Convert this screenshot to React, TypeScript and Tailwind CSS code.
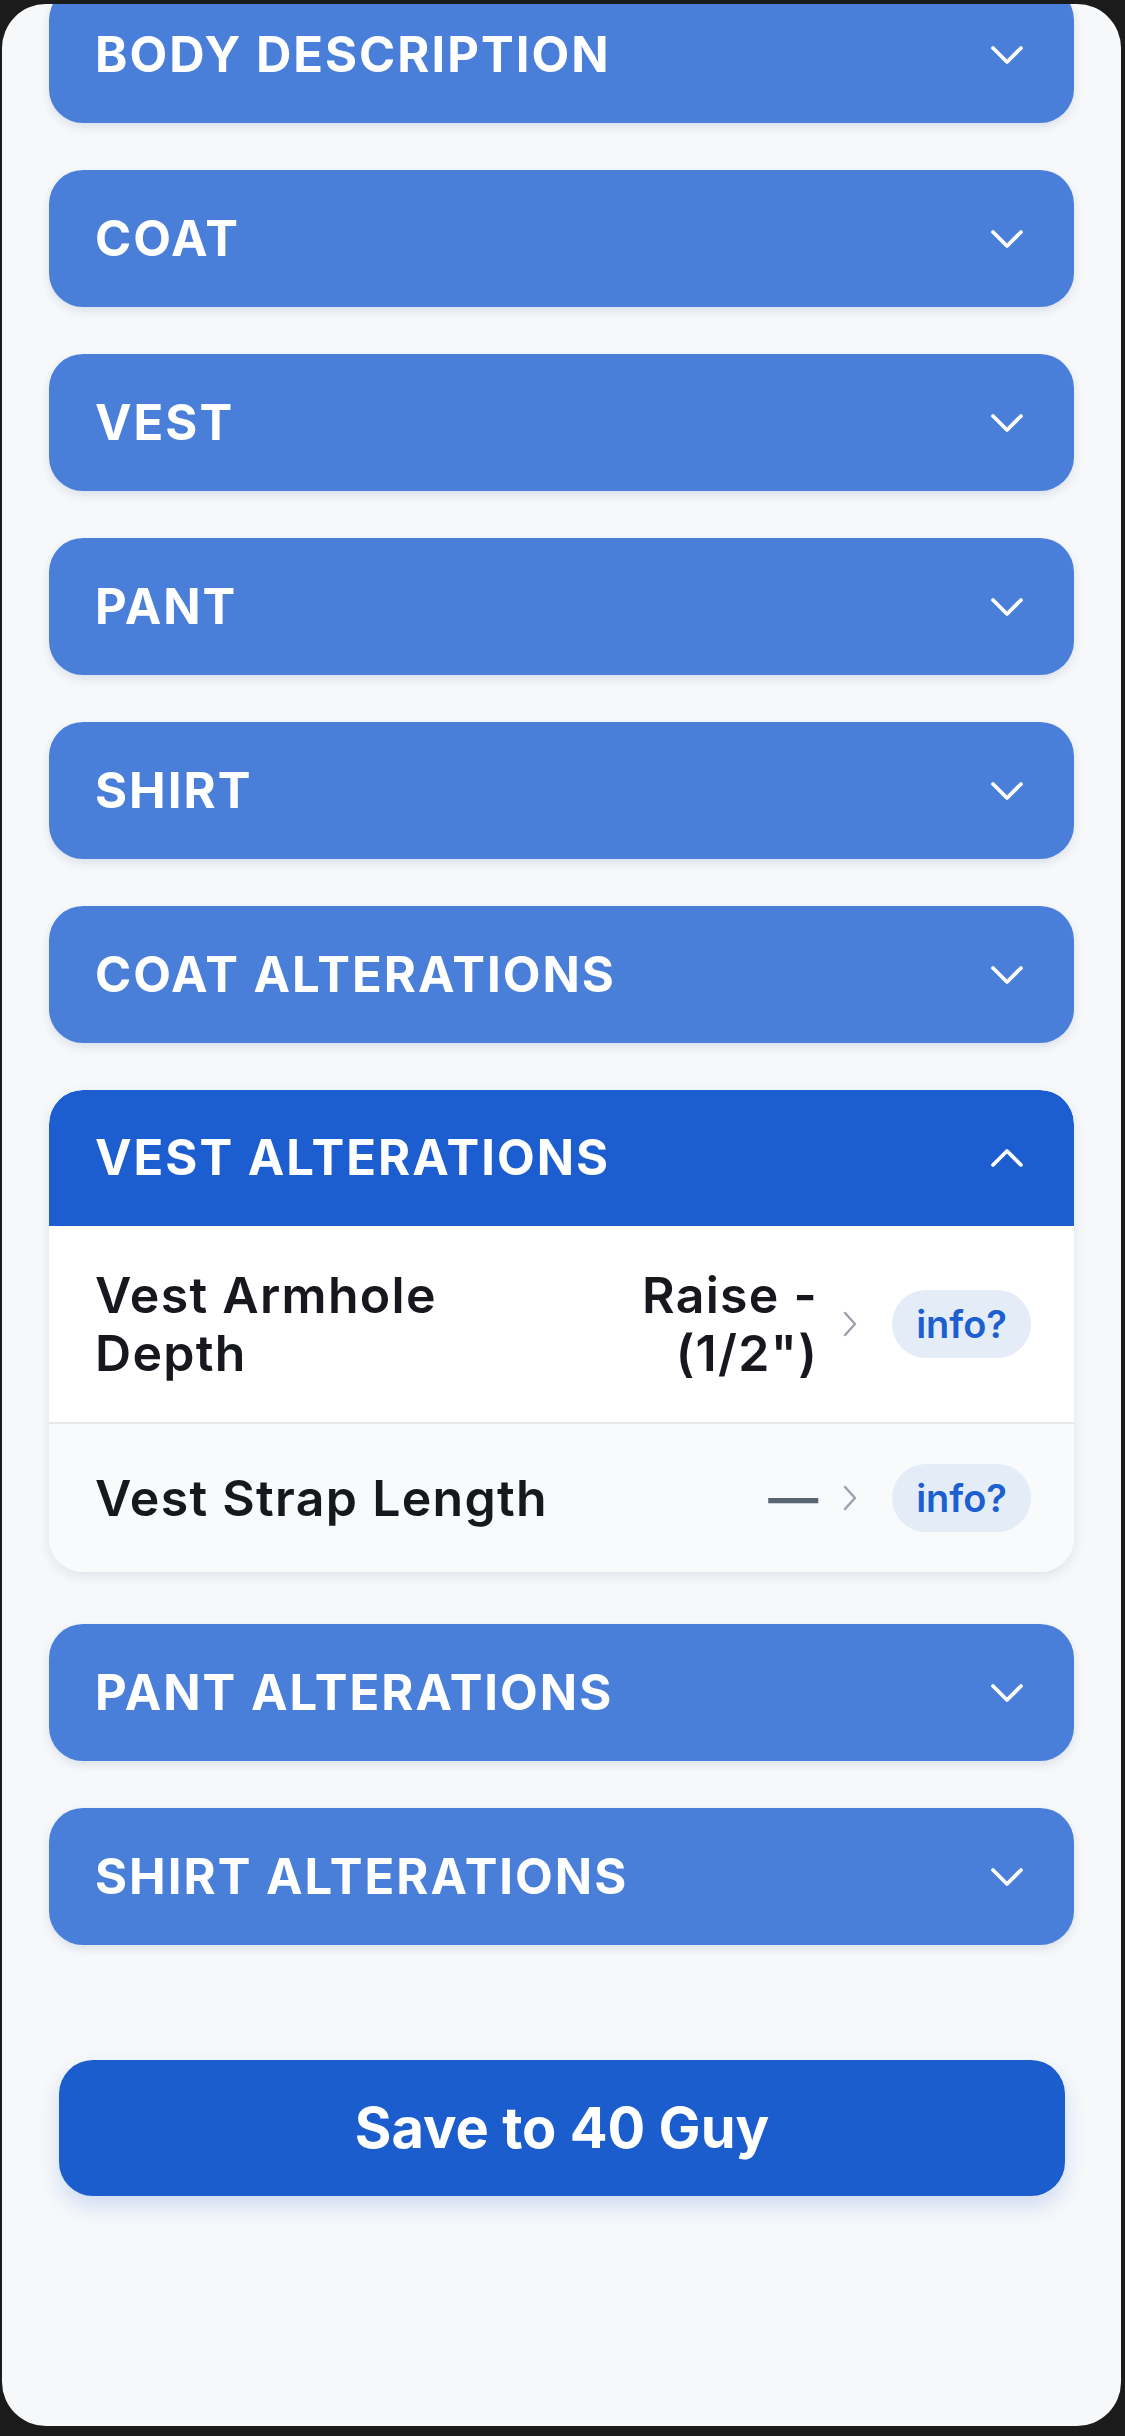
import { ChevronDown, ChevronUp } from 'lucide-react';

const sections = ['Body Description', 'Coat', 'Vest', 'Pant', 'Shirt', 'Coat Alterations'];
const after = ['Pant Alterations', 'Shirt Alterations'];

function SectionHeader({ title, open }: { title: string; open?: boolean }) {
  return (
    <div
      className={
        open
          ? 'h-[136px] flex items-center justify-between pl-[46px] pr-[39px] bg-[#1c5ecf] rounded-t-[34px]'
          : 'h-[137px] flex items-center justify-between pl-[46px] pr-[39px] bg-[#4a7fd9] rounded-[34px] shadow-[0_4px_10px_rgba(30,60,120,0.12)]'
      }
    >
      <span className="text-white text-[49px] font-bold uppercase tracking-[2px]">{title}</span>
      {open ? (
        <ChevronUp size={56} strokeWidth={1.6} className="text-white" />
      ) : (
        <ChevronDown size={56} strokeWidth={1.6} className="text-white" />
      )}
    </div>
  );
}

function RowChevron() {
  return (
    <svg width="16" height="28" viewBox="0 0 16 28" className="shrink-0 text-[#9ca3af]">
      <path d="M3 3 L13 14 L3 25" fill="none" stroke="currentColor" strokeWidth="2.5" strokeLinecap="round" strokeLinejoin="round" />
    </svg>
  );
}

function InfoPill() {
  return (
    <div className="ml-[34px] shrink-0 h-[68px] px-[24px] rounded-full bg-[#e4ecf8] flex items-center text-[38px] font-semibold text-[#1d5fd0]">
      info?
    </div>
  );
}

export default function App() {
  return (
    <div className="w-[1125px] h-[2436px] bg-[#1b1b1b] pt-[4px] pl-[2px] pr-[4px] font-['Inter',sans-serif]">
      <div className="h-[2422px] rounded-[44px] bg-[#f6f8fa] overflow-hidden px-[47px]">
        <div className="-mt-[18px] flex flex-col gap-[47px]">
          {sections.map((s) => (
            <SectionHeader key={s} title={s} />
          ))}

          <div className="rounded-[34px] overflow-hidden shadow-[0_4px_12px_rgba(30,50,90,0.10)] mb-[5px]">
            <SectionHeader title="Vest Alterations" open />
            <div className="bg-white flex items-center pl-[46px] pr-[43px] py-[40px] border-b-2 border-[#e5e7eb]">
              <div className="flex-1 min-w-0 pr-[20px] text-[50px] leading-[58px] font-semibold tracking-[1.3px] text-[#16181d]">
                Vest Armhole Depth
              </div>
              <div className="max-w-[250px] text-right text-[50px] leading-[58px] font-semibold tracking-[1.3px] text-[#16181d] mr-[24px]">
                Raise - (1/2")
              </div>
              <RowChevron />
              <InfoPill />
            </div>
            <div className="bg-[#f9fafb] flex items-center pl-[46px] pr-[43px] py-[40px]">
              <div className="flex-1 min-w-0 text-[50px] leading-[58px] font-semibold tracking-[1.3px] text-[#16181d]">
                Vest Strap Length
              </div>
              <div className="text-right text-[50px] leading-[58px] font-semibold text-[#5b6473] mr-[24px]">—</div>
              <RowChevron />
              <InfoPill />
            </div>
          </div>

          {after.map((s) => (
            <SectionHeader key={s} title={s} />
          ))}
        </div>

        <button className="mt-[115px] mx-[10px] w-[1006px] h-[136px] rounded-[34px] bg-[#1b5dcc] text-white text-[56px] font-bold shadow-[0_10px_20px_rgba(27,93,204,0.18)]">
          Save to 40 Guy
        </button>
      </div>
    </div>
  );
}
